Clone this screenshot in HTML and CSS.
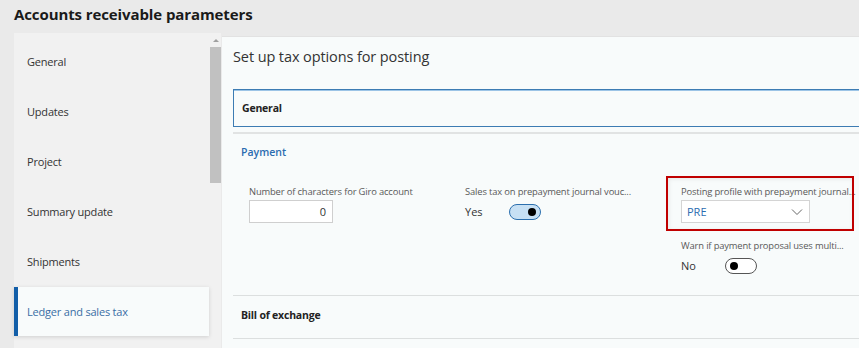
FILE: index.html
```html
<!DOCTYPE html>
<html lang="en">
<head>
    <meta charset="UTF-8">
    <meta name="viewport" content="width=device-width, initial-scale=1.0">
    <title>Accounts receivable parameters</title>
    <link rel="stylesheet" href="styles.css">
</head>
<body>
    <h1 class="page-title">Accounts receivable parameters</h1>
    <div class="layout">
        <div class="nav">
            <div class="nav-list">
                <div class="nav-item">General</div>
                <div class="nav-item">Updates</div>
                <div class="nav-item">Project</div>
                <div class="nav-item">Summary update</div>
                <div class="nav-item">Shipments</div>
                <div class="nav-item active">Ledger and sales tax</div>
            </div>
            <div class="scrollbar">
                <div class="scroll-arrow"></div>
                <div class="scroll-thumb"></div>
            </div>
        </div>
        <div class="main">
            <h2 class="main-title">Set up tax options for posting</h2>
            <div class="section-head focused">General</div>
            <div class="section">
                <div class="section-label link">Payment</div>
                <div class="fields">
                    <div class="field">
                        <div class="field-label">Number of characters for Giro account</div>
                        <div class="text-input">0</div>
                    </div>
                    <div class="field">
                        <div class="field-label">Sales tax on prepayment journal vouc...</div>
                        <div class="toggle-row">
                            <span class="toggle-text">Yes</span>
                            <span class="toggle on"><span class="knob"></span></span>
                        </div>
                    </div>
                    <div class="field-stack">
                        <div class="field highlighted">
                            <div class="field-label">Posting profile with prepayment journal...</div>
                            <div class="select">
                                <span>PRE</span>
                                <svg class="chevron" width="12" height="8" viewBox="0 0 12 8"><path d="M1 1.5 L6 6.5 L11 1.5" fill="none" stroke="#666" stroke-width="1"/></svg>
                            </div>
                            <div class="red-mark"></div>
                        </div>
                        <div class="field">
                            <div class="field-label">Warn if payment proposal uses multi...</div>
                            <div class="toggle-row">
                                <span class="toggle-text">No</span>
                                <span class="toggle"><span class="knob"></span></span>
                            </div>
                        </div>
                    </div>
                </div>
            </div>
            <div class="section-head last">Bill of exchange</div>
        </div>
    </div>
</body>
</html>
```

FILE: styles.css
```css
body {
    font-family: "Open Sans", "Noto Sans", sans-serif;
    margin: 0;
    padding: 0;
    background-color: #eaeaea;
    color: #333;
    height: 348px;
    overflow: hidden;
}
.page-title {
    margin: 0;
    padding: 4px 14px 0;
    height: 29px;
    font-size: 15px;
    font-weight: 700;
    color: #1a1a1a;
    letter-spacing: -0.1px;
}
.layout {
    display: flex;
    padding-left: 14px;
    height: 315px;
}
.nav {
    display: flex;
    width: 208px;
    background-color: #f1f1f1;
}
.nav-list {
    width: 195px;
    padding-top: 4px;
}
.nav-item {
    height: 50px;
    line-height: 50px;
    padding-left: 13px;
    font-size: 11px;
    color: #333;
    letter-spacing: -0.2px;
}
.nav-item.active {
    height: 49px;
    line-height: 49px;
    padding-left: 9px;
    border-left: 4px solid #125ea8;
    background-color: #f8fbfb;
    color: #3a6ea5;
    box-shadow: 0 1px 4px rgba(0,0,0,0.14);
}
.scrollbar {
    width: 11px;
    margin-left: 1px;
}
.scroll-arrow {
    width: 0;
    height: 0;
    margin: 6px auto 0;
    border-left: 3px solid transparent;
    border-right: 3px solid transparent;
    border-bottom: 3px solid #a0a0a0;
}
.scroll-thumb {
    margin-top: 5px;
    height: 136px;
    background-color: #c1c1c1;
}
.main {
    flex: 1;
    margin-top: 3px;
    margin-left: 1px;
    padding-left: 11px;
    background-color: #f8fbfb;
    border-top: 1px solid #e2e2e2;
}
.main-title {
    margin: 0;
    padding-top: 10px;
    height: 42px;
    font-size: 14.5px;
    font-weight: 400;
    color: #333;
    letter-spacing: -0.1px;
}
.section-head {
    height: 36px;
    line-height: 36px;
    padding-left: 8px;
    font-size: 10.5px;
    font-weight: 700;
    color: #222;
    letter-spacing: -0.2px;
}
.section-head.focused {
    border: 1px solid #3d7cb3;
    border-right: none;
    box-shadow: inset 0 1px 0 #9cc4e6;
    margin-bottom: 5px;
}
.section-head.last {
    height: 42px;
    line-height: 38px;
    border-top: 1px solid #dcdfdf;
    border-bottom: 1px solid #dcdfdf;
}
.section {
    border-top: 2px solid #e1e3e3;
    height: 161px;
}
.section-label {
    padding: 11px 0 0 8px;
    height: 28px;
    font-size: 10.5px;
    font-weight: 600;
}
.link {
    color: #2b6cb0;
}
.fields {
    display: flex;
    padding-left: 16px;
    padding-top: 12px;
}
.field {
    width: 216px;
    position: relative;
}
.field-stack {
    display: flex;
    flex-direction: column;
    gap: 16px;
}
.field-label {
    font-size: 9.4px;
    color: #595959;
    height: 15px;
    letter-spacing: -0.15px;
}
.text-input {
    width: 76px;
    height: 21px;
    line-height: 21px;
    padding-right: 6px;
    text-align: right;
    border: 1px solid #cfcfcf;
    background-color: #fff;
    font-size: 11px;
    color: #333;
}
.toggle-row {
    display: flex;
    align-items: center;
    height: 23px;
}
.toggle-text {
    width: 44px;
    font-size: 11px;
    color: #333;
}
.toggle {
    width: 32px;
    height: 16px;
    border: 1px solid #555;
    border-radius: 8px;
    background-color: #fff;
    display: flex;
    align-items: center;
    padding: 0 4px;
    box-sizing: border-box;
}
.toggle.on {
    border-color: #2c6fae;
    background-color: #c7e0f4;
    justify-content: flex-end;
}
.knob {
    width: 8px;
    height: 8px;
    border-radius: 50%;
    background-color: #000;
}
.select {
    width: 129px;
    height: 23px;
    border: 1px solid #d4d4d4;
    background-color: #fff;
    display: flex;
    align-items: center;
    justify-content: space-between;
    padding: 0 6px 0 5px;
    box-sizing: border-box;
    font-size: 11px;
    color: #2b6cb0;
}
.red-mark {
    position: absolute;
    left: -15px;
    top: -9px;
    width: 184px;
    height: 51px;
    border: 2px solid #c00000;
    box-shadow: inset 1px 1px 4px rgba(0,0,0,0.08);
}
```
